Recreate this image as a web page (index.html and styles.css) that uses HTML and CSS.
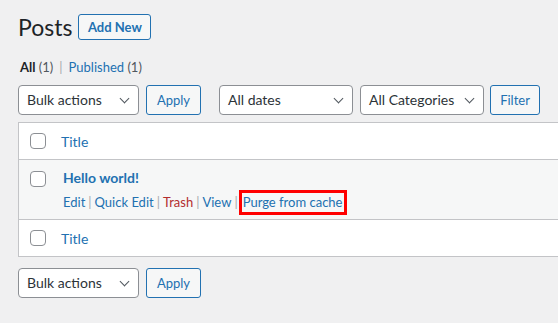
FILE: index.html
```html
<!DOCTYPE html>
<html>
<head>
<meta charset="utf-8">
<link rel="stylesheet" href="styles.css">
</head>
<body>
<div class="wrap">
  <div class="head">
    <h1 class="title">Posts</h1>
    <a class="btn add-new">Add New</a>
  </div>
  <ul class="subsubsub">
    <li><b class="cur">All</b> <span class="count">(1)</span></li>
    <li class="sep">|</li>
    <li><a class="link">Published <span class="count-l">(1)</span></a></li>
  </ul>
  <div class="tablenav">
    <div class="select w-bulk">Bulk actions<span class="chev"></span></div>
    <a class="btn action">Apply</a>
    <div class="select w-dates">All dates<span class="chev"></span></div>
    <div class="select w-cats">All Categories<span class="chev"></span></div>
    <a class="btn action filter">Filter</a>
  </div>
  <div class="table">
    <div class="row hdr">
      <div class="cb"><span class="box"></span></div>
      <div class="col-title"><a class="link">Title</a></div>
    </div>
    <div class="row post">
      <div class="cb cb-post"><span class="box"></span></div>
      <div class="col-title post-title">
        <strong class="link strong">Hello world!</strong>
        <div class="actions">
          <a class="link">Edit</a><span class="bar">|</span><a class="link">Quick Edit</a><span class="bar">|</span><a class="trash">Trash</a><span class="bar">|</span><a class="link">View</a><span class="bar bar-last">|</span><a class="link purge">Purge from cache</a>
        </div>
      </div>
    </div>
    <div class="row ftr">
      <div class="cb"><span class="box"></span></div>
      <div class="col-title"><a class="link">Title</a></div>
    </div>
  </div>
  <div class="tablenav bottom">
    <div class="select w-bulk">Bulk actions<span class="chev"></span></div>
    <a class="btn action">Apply</a>
  </div>
</div>
</body>
</html>
```
FILE: styles.css
```css
html, body {
  margin: 0;
  padding: 0;
  background: #f0f0f1;
  width: 558px;
  height: 323px;
  overflow: hidden;
  font-family: "Lato", "Noto Sans", sans-serif;
  font-size: 13px;
  color: #3c434a;
}
.wrap {
  padding: 14px 0 0 18px;
}
.head {
  display: flex;
  align-items: center;
  gap: 6px;
  height: 26px;
}
.title {
  margin: 0;
  font-size: 23px;
  font-weight: 400;
  color: #1d2327;
  line-height: 26px;
}
.btn {
  display: inline-flex;
  align-items: center;
  justify-content: center;
  box-sizing: border-box;
  border: 1px solid #2271b1;
  border-radius: 3px;
  background: #f6f7f7;
  color: #2271b1;
  font-size: 13px;
}
.add-new {
  width: 73px;
  height: 26px;
  font-weight: 700;
}
.subsubsub {
  list-style: none;
  margin: 17px 0 0 2px;
  padding: 0;
  display: flex;
  gap: 6px;
  height: 20px;
  align-items: center;
  font-size: 13px;
}
.cur { color: #1d2327; font-weight: 700; }
.count { color: #50575e; }
.sep { color: #a7aaad; }
.link { color: #2271b1; text-decoration: none; }
.count-l { color: #50575e; }
.tablenav {
  display: flex;
  align-items: center;
  height: 30px;
  margin-top: 8px;
}
.select {
  position: relative;
  box-sizing: border-box;
  height: 30px;
  border: 1px solid #8c8f94;
  border-radius: 4px;
  background: #fff;
  color: #2c3338;
  font-size: 14px;
  line-height: 28px;
  padding-left: 8px;
  white-space: nowrap;
}
.chev {
  position: absolute;
  right: 10px;
  top: 9px;
  width: 6px;
  height: 6px;
  border-right: 1.5px solid #50575e;
  border-bottom: 1.5px solid #50575e;
  transform: rotate(45deg);
}
.w-bulk { width: 121px; }
.w-dates { width: 134px; margin-left: 18px; }
.w-cats { width: 124px; margin-left: 7px; }
.action {
  width: 55px;
  height: 30px;
  margin-left: 7px;
  font-size: 13px;
}
.filter { width: 50px; margin-left: 6px; }
.table {
  margin-top: 7px;
  width: 560px;
  border: 1px solid #c3c4c7;
  background: #fff;
}
.row {
  display: flex;
}
.hdr, .ftr {
  height: 36px;
  align-items: center;
}
.hdr { border-bottom: 1px solid #c3c4c7; }
.ftr { border-top: 1px solid #c3c4c7; }
.post {
  height: 59px;
  background: #f6f7f7;
}
.cb {
  width: 42px;
  padding-left: 11px;
  box-sizing: border-box;
  display: flex;
}
.cb-post { padding-top: 11px; }
.box {
  display: block;
  box-sizing: border-box;
  width: 16px;
  height: 16px;
  border: 1px solid #8c8f94;
  border-radius: 4px;
  background: #fff;
}
.col-title {
  font-size: 14px;
}
.post-title {
  padding: 8px 0 0 2px;
}
.strong {
  display: block;
  font-weight: 700;
  font-size: 14px;
  line-height: 20px;
}
.actions {
  margin-top: 2px;
  font-size: 13px;
  line-height: 19px;
  display: flex;
  align-items: center;
}
.bar { color: #a7aaad; margin: 0 3px; }
.bar-last { margin-right: 1px; }
.trash { color: #b32d2e; }
.purge {
  border: 3px solid #f00;
  padding: 0 2px 0 1px;
  line-height: 19px;
}
.bottom { margin-top: 11px; }
```
